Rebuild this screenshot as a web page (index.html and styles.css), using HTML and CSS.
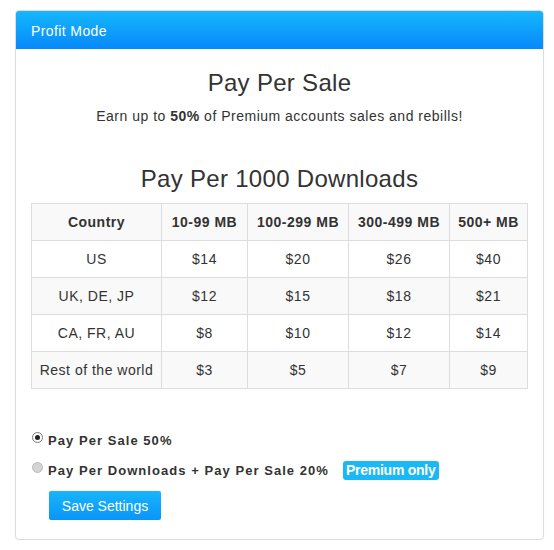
FILE: index.html
```html
<!DOCTYPE html>
<html>
<head>
<meta charset="utf-8">
<link rel="stylesheet" href="styles.css">
</head>
<body>
<div class="panel">
  <div class="panel-head">Profit Mode</div>
  <div class="panel-body">
    <h2 class="title">Pay Per Sale</h2>
    <p class="lead">Earn up to <b>50%</b> of Premium accounts sales and rebills!</p>
    <h2 class="title title2">Pay Per 1000 Downloads</h2>
    <table class="rates">
      <thead>
        <tr><th>Country</th><th>10-99 MB</th><th>100-299 MB</th><th>300-499 MB</th><th>500+ MB</th></tr>
      </thead>
      <tbody>
        <tr><td>US</td><td>$14</td><td>$20</td><td>$26</td><td>$40</td></tr>
        <tr><td>UK, DE, JP</td><td>$12</td><td>$15</td><td>$18</td><td>$21</td></tr>
        <tr><td>CA, FR, AU</td><td>$8</td><td>$10</td><td>$12</td><td>$14</td></tr>
        <tr><td>Rest of the world</td><td>$3</td><td>$5</td><td>$7</td><td>$9</td></tr>
      </tbody>
    </table>
    <div class="options">
      <label class="opt"><span class="radio on"></span>Pay Per Sale 50%</label>
      <label class="opt"><span class="radio off"></span>Pay Per Downloads + Pay Per Sale 20%<span class="badge">Premium only</span></label>
      <button class="btn">Save Settings</button>
    </div>
  </div>
</div>
</body>
</html>
```
FILE: styles.css
```css
html, body { margin: 0; padding: 0; background: #fff; }
body {
  font-family: "Liberation Sans", Arial, sans-serif;
  color: #333;
  padding: 10px 9px 0 15px;
}
.panel {
  width: 529px;
  height: 530px;
  box-sizing: border-box;
  border: 1px solid #dcdcdc;
  border-radius: 4px;
  box-shadow: 0 1px 1px rgba(0,0,0,0.06);
  overflow: hidden;
}
.panel-head {
  height: 39px;
  box-sizing: border-box;
  padding: 13px 15px 0 16px;
  background: linear-gradient(#15b9fd, #0788fa);
  color: #fff;
  font-size: 14px;
  letter-spacing: 0.4px;
  margin: -1px -1px 0 -1px;
}
.panel-body {
  padding: 0 15px;
}
.title {
  margin: 20px 0 0 0;
  font-size: 24px;
  font-weight: normal;
  text-align: center;
  line-height: 28px;
  letter-spacing: 0.3px;
}
.lead {
  margin: 9px 0 0 0;
  text-align: center;
  font-size: 14px;
  line-height: 20px;
  letter-spacing: 0.5px;
}
.title2 { margin-top: 39px; }
.rates {
  margin-top: 10px;
  width: 497px;
  border-collapse: collapse;
  font-size: 14px;
  letter-spacing: 0.5px;
}
.rates th, .rates td {
  border: 1px solid #dddddd;
  height: 36px;
  padding: 0;
  text-align: center;
  vertical-align: middle;
}
.rates th { font-weight: bold; }
.rates th:nth-child(1) { width: 129px; }
.rates th:nth-child(2) { width: 85px; }
.rates th:nth-child(3) { width: 100px; }
.rates th:nth-child(4) { width: 100px; }
.rates thead tr, .rates tbody tr:nth-child(even) { background: #f9f9f9; }
.options {
  margin-top: 41px;
  display: flex;
  flex-direction: column;
  align-items: flex-start;
}
.opt {
  display: flex;
  align-items: center;
  font-size: 13px;
  font-weight: bold;
  letter-spacing: 1.05px;
  height: 20px;
  margin-bottom: 10px;
  margin-left: 1px;
}
.radio {
  width: 11px;
  height: 11px;
  box-sizing: border-box;
  border-radius: 50%;
  margin-right: 5px;
  margin-top: -5px;
  position: relative;
}
.radio.on { border: 1px solid #777; background: #fff; }
.radio.on::after {
  content: "";
  position: absolute;
  left: 2px; top: 2px;
  width: 5px; height: 5px;
  border-radius: 50%;
  background: #222;
}
.radio.off { border: 1px solid #bbb; background: #d4d4d4; }
.badge {
  margin-left: 14px;
  background: #1ab8f6;
  color: #fff;
  border-radius: 3px;
  padding: 0 3px;
  height: 19px;
  line-height: 19px;
  font-size: 14px;
  letter-spacing: -0.25px;
}
.btn {
  margin-left: 18px;
  margin-top: 1px;
  width: 112px;
  height: 29px;
  border: none;
  border-radius: 2px;
  background: linear-gradient(#18b5fb, #0a95f8);
  color: #fff;
  font-family: "Liberation Sans", Arial, sans-serif;
  font-size: 14px;
  padding: 0;
}
```
